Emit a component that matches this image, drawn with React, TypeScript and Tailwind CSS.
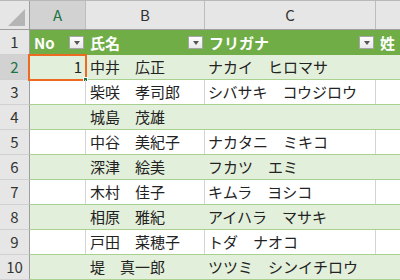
const rows = [
  { no: '1', name: '中井　広正', kana: 'ナカイ　ヒロマサ' },
  { no: '', name: '柴咲　孝司郎', kana: 'シバサキ　コウジロウ' },
  { no: '', name: '城島　茂雄', kana: '' },
  { no: '', name: '中谷　美紀子', kana: 'ナカタニ　ミキコ' },
  { no: '', name: '深津　絵美', kana: 'フカツ　エミ' },
  { no: '', name: '木村　佳子', kana: 'キムラ　ヨシコ' },
  { no: '', name: '相原　雅紀', kana: 'アイハラ　マサキ' },
  { no: '', name: '戸田　菜穂子', kana: 'トダ　ナオコ' },
  { no: '', name: '堤　真一郎', kana: 'ツツミ　シンイチロウ' },
];

const font = { fontFamily: '"Noto Sans CJK JP", "Noto Sans", sans-serif' };

function FilterButton() {
  return (
    <div className="flex h-[13px] w-[15px] shrink-0 items-center justify-center border border-[#a6a6a6] bg-gradient-to-b from-[#fdfdfd] to-[#e9e9e9]">
      <div className="h-0 w-0 border-x-[3.5px] border-t-[4px] border-x-transparent border-t-[#555]" />
    </div>
  );
}

function HeaderCell({ label, width, last }: { label: string; width: string; last?: boolean }) {
  return (
    <div
      className={`flex h-full items-center justify-between pl-[4px] pr-[1px] text-[15px] font-bold text-white ${width} ${
        last ? '' : 'border-r border-[#70ad47]'
      }`}
    >
      <span className="leading-none">{label}</span>
      {!last && <FilterButton />}
    </div>
  );
}

export default function App() {
  return (
    <div className="h-[280px] w-[400px] overflow-hidden bg-white text-[#222]" style={font}>
      {/* column headers */}
      <div className="flex h-[30px] border-t border-b border-t-[#b8b8b8] border-b-[#9e9e9e] bg-[#e6e6e6] text-[15px] text-[#333]">
        <div className="relative h-full w-[30px] shrink-0 border-r border-[#9e9e9e]">
          <div className="absolute bottom-[3px] right-[4px] h-0 w-0 border-b-[17px] border-l-[17px] border-b-[#b5b5b5] border-l-transparent" />
        </div>
        <div className="flex w-[56px] shrink-0 items-center justify-center border-r border-[#bdbdbd] bg-[#d2d2d2] text-[#217346]">
          A
        </div>
        <div className="flex w-[119px] shrink-0 items-center justify-center border-r border-[#bdbdbd]">B</div>
        <div className="flex w-[171px] shrink-0 items-center justify-center border-r border-[#bdbdbd]">C</div>
        <div className="flex-1" />
      </div>

      {/* table header row */}
      <div className="flex h-[25px]">
        <div className="flex w-[30px] shrink-0 items-center justify-center border-r border-b border-[#9e9e9e] border-b-[#d0d0d0] bg-[#e6e6e6] text-[15px] text-[#333]">
          1
        </div>
        <div className="flex flex-1 bg-[#70ad47]">
          <HeaderCell label="No" width="w-[56px] shrink-0" />
          <HeaderCell label="氏名" width="w-[119px] shrink-0" />
          <HeaderCell label="フリガナ" width="w-[171px] shrink-0" />
          <HeaderCell label="姓" width="flex-1" last />
        </div>
      </div>

      {rows.map((r, i) => {
        const banded = i % 2 === 0;
        const selected = i === 0;
        const grid = banded ? 'border-r border-transparent' : 'border-r border-[#d4d4d4]';
        return (
          <div key={i} className="flex h-[25px]">
            <div
              className={`flex w-[30px] shrink-0 items-center justify-center border-r border-b border-[#9e9e9e] border-b-[#d0d0d0] text-[15px] ${
                selected ? 'bg-[#d2d2d2] text-[#217346]' : 'bg-[#e6e6e6] text-[#333]'
              }`}
            >
              {i + 2}
            </div>
            <div
              className={`flex flex-1 border-b border-[#a9d08e] text-[15px] ${banded ? 'bg-[#e2efda]' : 'bg-white'}`}
            >
              <div className={`relative flex w-[56px] shrink-0 items-center justify-end pr-[3px] ${grid}`}>
                {r.no}
                {selected && (
                  <div className="absolute -left-[2px] -top-[1px] -bottom-[2px] -right-[2px] border-2 border-[#ee6a23]">
                    <div className="absolute -bottom-[3px] -right-[3px] h-[5px] w-[5px] border border-white bg-[#217346]" />
                  </div>
                )}
              </div>
              <div className={`flex w-[119px] shrink-0 items-center pl-[4px] ${grid}`}>{r.name}</div>
              <div className={`flex w-[171px] shrink-0 items-center pl-[3px] ${grid}`}>{r.kana}</div>
              <div className="flex-1" />
            </div>
          </div>
        );
      })}
    </div>
  );
}
